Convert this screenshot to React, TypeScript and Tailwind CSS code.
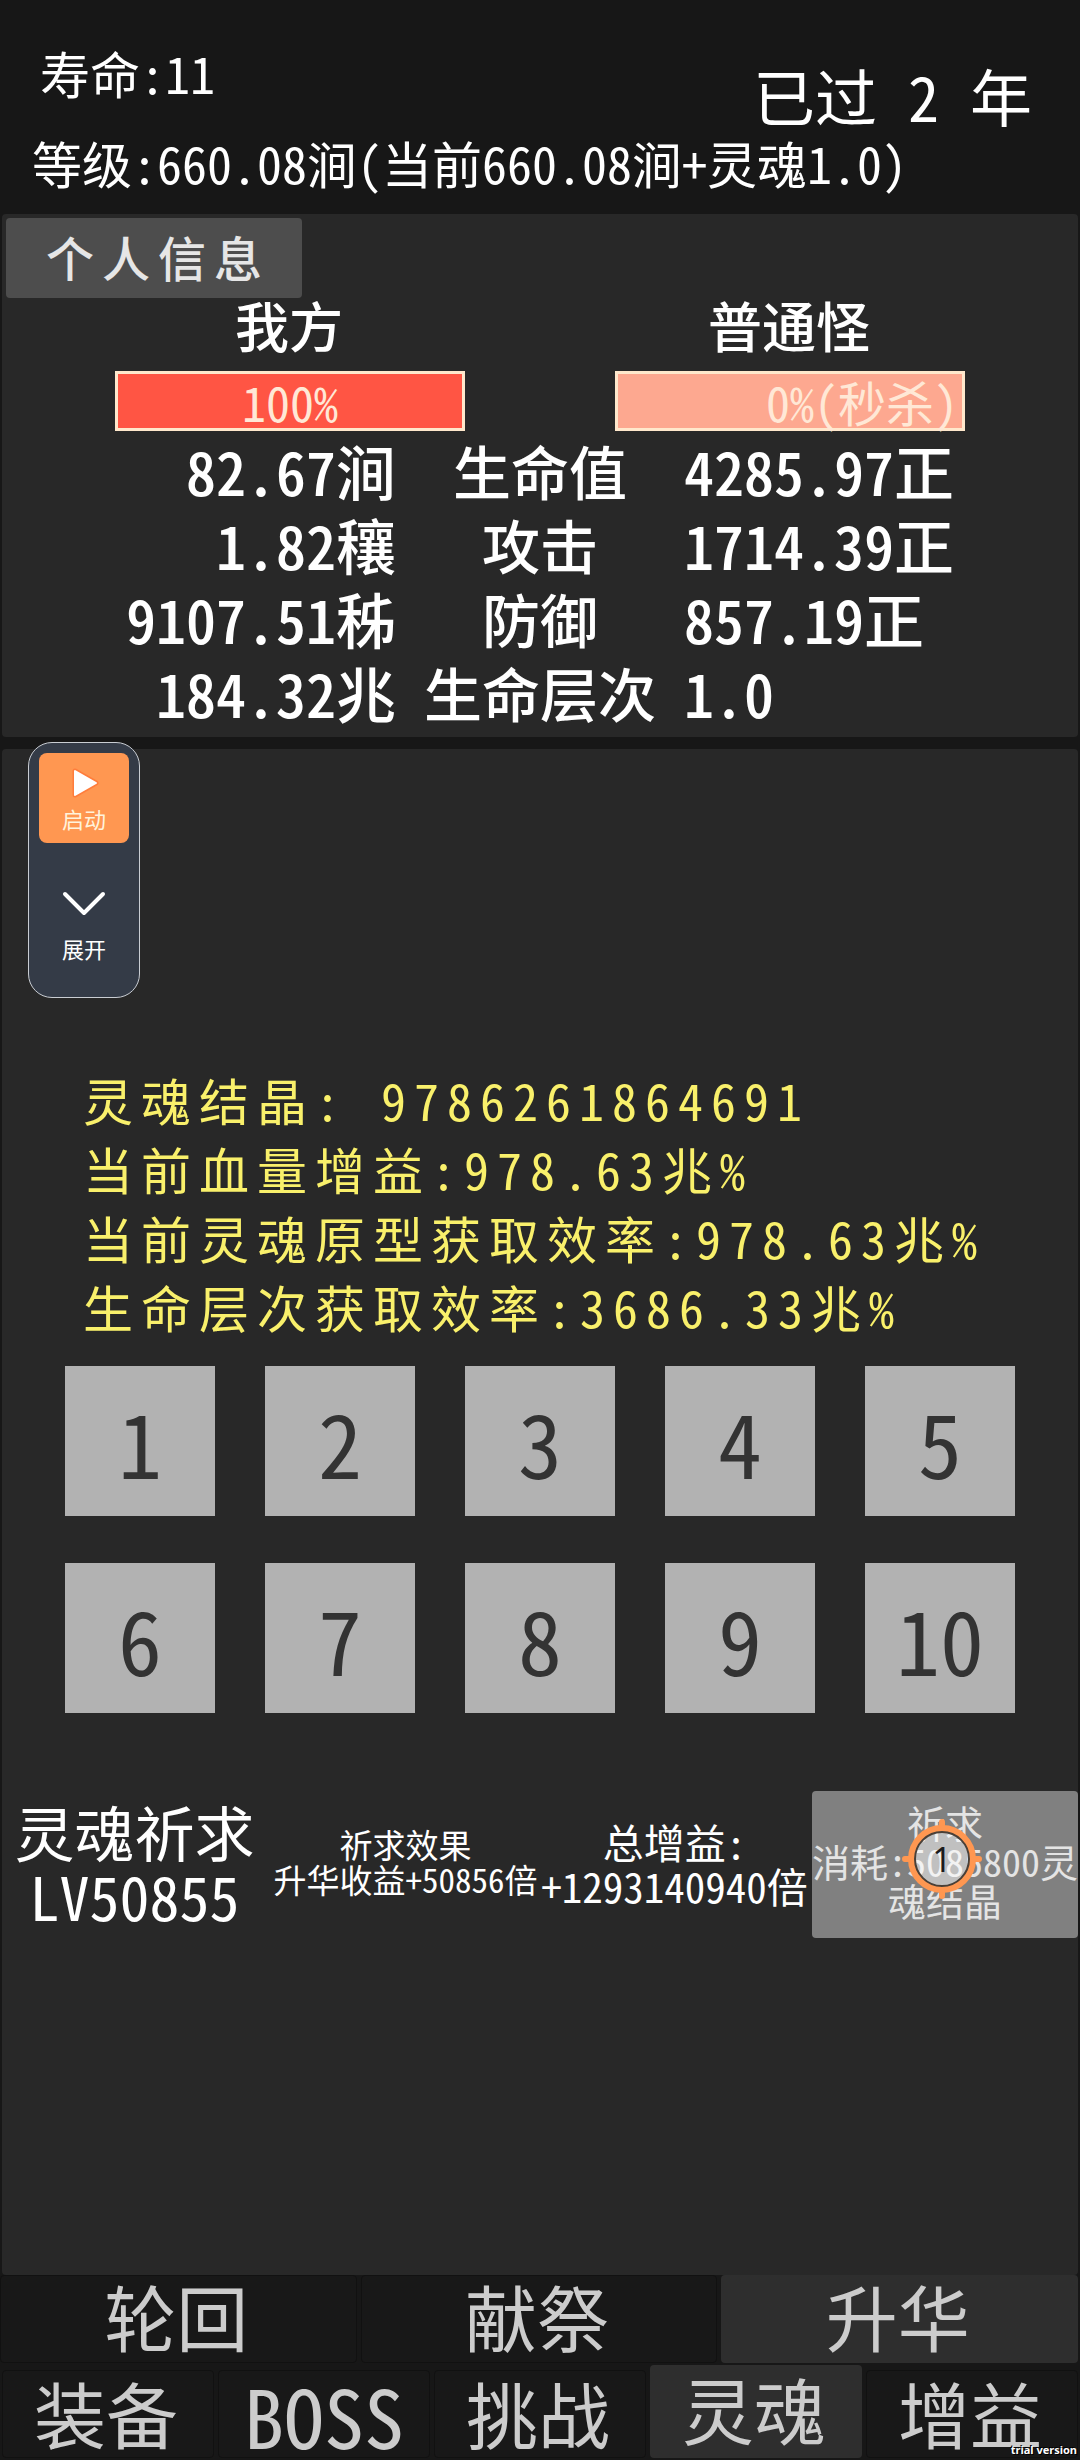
import React from 'react';

interface Stat {
    label: string;
    mine: string;
    enemy: string;
}

const stats: Stat[] = [
    { label: '生命值', mine: '82.67涧', enemy: '4285.97正' },
    { label: '攻击', mine: '1.82穰', enemy: '1714.39正' },
    { label: '防御', mine: '9107.51秭', enemy: '857.19正' },
    { label: '生命层次', mine: '184.32兆', enemy: '1.0' }
];

const soulLines = [
    '灵魂结晶: 9786261864691',
    '当前血量增益:978.63兆%',
    '当前灵魂原型获取效率:978.63兆%',
    '生命层次获取效率:3686.33兆%'
];

const slots = [1, 2, 3, 4, 5, 6, 7, 8, 9, 10];

const subTabs = ['轮回', '献祭', '升华'];
const mainTabs = ['装备', 'BOSS', '挑战', '灵魂', '增益'];

const Header: React.FC = () => (
    <header className="flex h-[214px] flex-col justify-end pb-6 text-[50px] leading-[56px]">
        <div className="flex items-start justify-between pr-12 pb-1 pl-10">
            <span>寿命:11</span>
            <span className="mt-4 text-[62px] leading-[70px] whitespace-pre">已过 2 年</span>
        </div>
        <p className="pl-8 whitespace-nowrap">等级:660.08涧(当前660.08涧+灵魂1.0)</p>
    </header>
);

const BattlePanel: React.FC = () => (
    <section className="mx-[2px] rounded-sm bg-[#282828] pt-1 pb-2">
        <button
            type="button"
            className="ml-1 block h-20 w-[296px] rounded-sm bg-[#4d4d4d] pb-1 pl-2 text-[48px] leading-[72px] font-medium tracking-[8px] text-[#e6e6e6]"
        >
            个人信息
        </button>
        <div className="grid grid-cols-2 text-center text-[54px] leading-[54px] font-medium">
            <h2 className="pl-9">我方</h2>
            <h2 className="pr-10">普通怪</h2>
        </div>
        <div className="mt-[19px] flex justify-center gap-[150px] text-[48px] leading-[54px] text-[#ffe8d6]">
            <div className="h-[60px] w-[350px] border-3 border-[#ffe8cc] bg-[#ff5544] text-center">100%</div>
            <div className="h-[60px] w-[350px] border-3 border-[#ffe8cc] bg-[#fda890] pr-1 text-right">0%(秒杀)</div>
        </div>
        <table className="mt-0.5 w-full table-fixed leading-[74px] font-medium">
            <tbody>
                {stats.map(stat => (
                    <tr key={stat.label} className="text-[60px]">
                        <td className="p-0 text-right">{stat.mine}</td>
                        <th scope="row" className="w-[288px] p-0 text-[58px] font-medium">{stat.label}</th>
                        <td className="p-0 text-left">{stat.enemy}</td>
                    </tr>
                ))}
            </tbody>
        </table>
    </section>
);

const FloatingControls: React.FC = () => (
    <div className="absolute -top-[7px] left-[26px] flex w-28 flex-col items-center rounded-3xl border border-[#c9cdd3] bg-[#343b47] pt-[10px] pb-[34px] text-[22px] leading-[30px]">
        <button
            type="button"
            className="flex h-[90px] w-[90px] flex-col items-center rounded-lg bg-[#ff9751] pt-3 text-[#fff3dc]"
        >
            <svg viewBox="0 0 34 36" className="h-9 w-[34px]" aria-hidden="true">
                <path
                    d="M8 6v24L29 18z"
                    fill="#ff7d3c"
                    stroke="#ff7d3c"
                    strokeWidth="5"
                    strokeLinejoin="round"
                />
                <path d="M8 6v24L29 18z" fill="#fff" stroke="#fff" strokeWidth="2" strokeLinejoin="round" />
            </svg>
            <span className="mt-0.5">启动</span>
        </button>
        <button type="button" className="mt-12 flex flex-col items-center gap-4 text-white">
            <svg viewBox="0 0 44 26" className="h-[26px] w-11" aria-hidden="true">
                <path d="M3 3l19 19L41 3" fill="none" stroke="#fff" strokeWidth="4" strokeLinecap="round" strokeLinejoin="round" />
            </svg>
            <span>展开</span>
        </button>
    </div>
);

const TapMarker: React.FC = () => (
    <div className="pointer-events-none absolute inset-0 flex items-center justify-center">
        <svg viewBox="0 0 80 80" className="-mt-3 -ml-1 h-20 w-20 shrink-0" aria-hidden="true">
            <path d="M40 3v7M40 70v7M3 40h7M70 40h7" stroke="#ff9751" strokeWidth="6" strokeLinecap="round" />
            <circle cx="40" cy="40" r="28" fill="#fff" fillOpacity="0.5" stroke="#4a4038" strokeWidth="4" />
            <circle cx="40" cy="40" r="31" fill="none" stroke="#ff9751" strokeWidth="6" />
            <text x="40" y="53" textAnchor="middle" fontSize="34" fill="#1c1c1c" fontFamily="Noto Sans">1</text>
        </svg>
    </div>
);

const PrayRow: React.FC = () => (
    <div className="mt-[78px] grid grid-cols-4 text-center whitespace-nowrap">
        <div className="pt-2 pr-1 text-[60px] leading-[64px]">
            <p>灵魂祈求</p>
            <p>LV50855</p>
        </div>
        <div className="flex flex-col items-center pt-9 text-[33px] leading-[35px]">
            <p>祈求效果</p>
            <p>升华收益+50856倍</p>
        </div>
        <div className="flex flex-col items-center pt-7 text-[41px] leading-[44px]">
            <p>总增益:</p>
            <p>+1293140940倍</p>
        </div>
        <div className="relative pl-[3px]">
            <button
                type="button"
                className="h-[147px] w-full rounded-sm bg-[#808080] pb-2 text-[38px] leading-[39px] text-[#e4e4e4]"
            >
                祈求
                <br />
                消耗:5085800灵
                <br />
                魂结晶
            </button>
            <TapMarker />
        </div>
    </div>
);

const SoulPanel: React.FC = () => (
    <section className="relative mx-[2px] mt-3 grow rounded-sm bg-[#282828] pt-[316px]">
        <FloatingControls />
        <div className="pl-[81px] text-[50px] leading-[69px] tracking-[8px] whitespace-nowrap text-[#f9f06b]">
            {soulLines.map(line => (
                <p key={line}>{line}</p>
            ))}
        </div>
        <div className="mx-[63px] mt-[25px] grid grid-cols-5 gap-x-[50px] gap-y-[47px]">
            {slots.map(slot => (
                <button
                    key={slot}
                    type="button"
                    className="h-[150px] bg-[#b2b2b2] text-[88px] leading-[146px] text-[#333333]"
                >
                    {slot}
                </button>
            ))}
        </div>
        <PrayRow />
    </section>
);

const TabBar: React.FC = () => (
    <nav className="text-[72px] text-[#cccccc]">
        <div className="grid grid-cols-3 gap-1 pr-[2px]">
            {subTabs.map(tab => (
                <button
                    key={tab}
                    type="button"
                    className={
                        tab === '升华'
                            ? 'h-[88px] rounded bg-[#2e2e2e] pr-1 pb-2 leading-[72px]'
                            : 'h-[88px] rounded border border-[#111111] bg-[#181818] pr-1 pb-2 leading-[72px]'
                    }
                >
                    {tab}
                </button>
            ))}
        </div>
        <div className="mt-[2px] grid grid-cols-5 items-end gap-1 px-[2px] pb-[2px]">
            {mainTabs.map(tab => (
                <button
                    key={tab}
                    type="button"
                    className={
                        tab === '灵魂'
                            ? 'h-[93px] rounded bg-[#2e2e2e] pr-1 pb-2 leading-[72px]'
                            : tab === 'BOSS'
                                ? 'h-[88px] rounded border border-[#111111] bg-[#181818] text-[80px] leading-[72px]'
                                : 'h-[88px] rounded border border-[#111111] bg-[#181818] pr-1 pb-1 leading-[72px]'
                    }
                >
                    {tab}
                </button>
            ))}
        </div>
    </nav>
);

const App: React.FC = () => {
    return (
        <div className="relative flex min-h-screen flex-col overflow-hidden bg-[#171717] font-['Noto_Sans_CJK_SC',sans-serif] text-white [font-feature-settings:'hwid']">
            <Header />
            <BattlePanel />
            <SoulPanel />
            <TabBar />
            <span className="absolute right-[3px] bottom-[2px] font-['Noto_Sans',sans-serif] text-[11px] leading-[16px] font-bold [text-shadow:1px_1px_0_#000,-1px_-1px_0_#000]">
                trial version
            </span>
        </div>
    );
};

export default App;
